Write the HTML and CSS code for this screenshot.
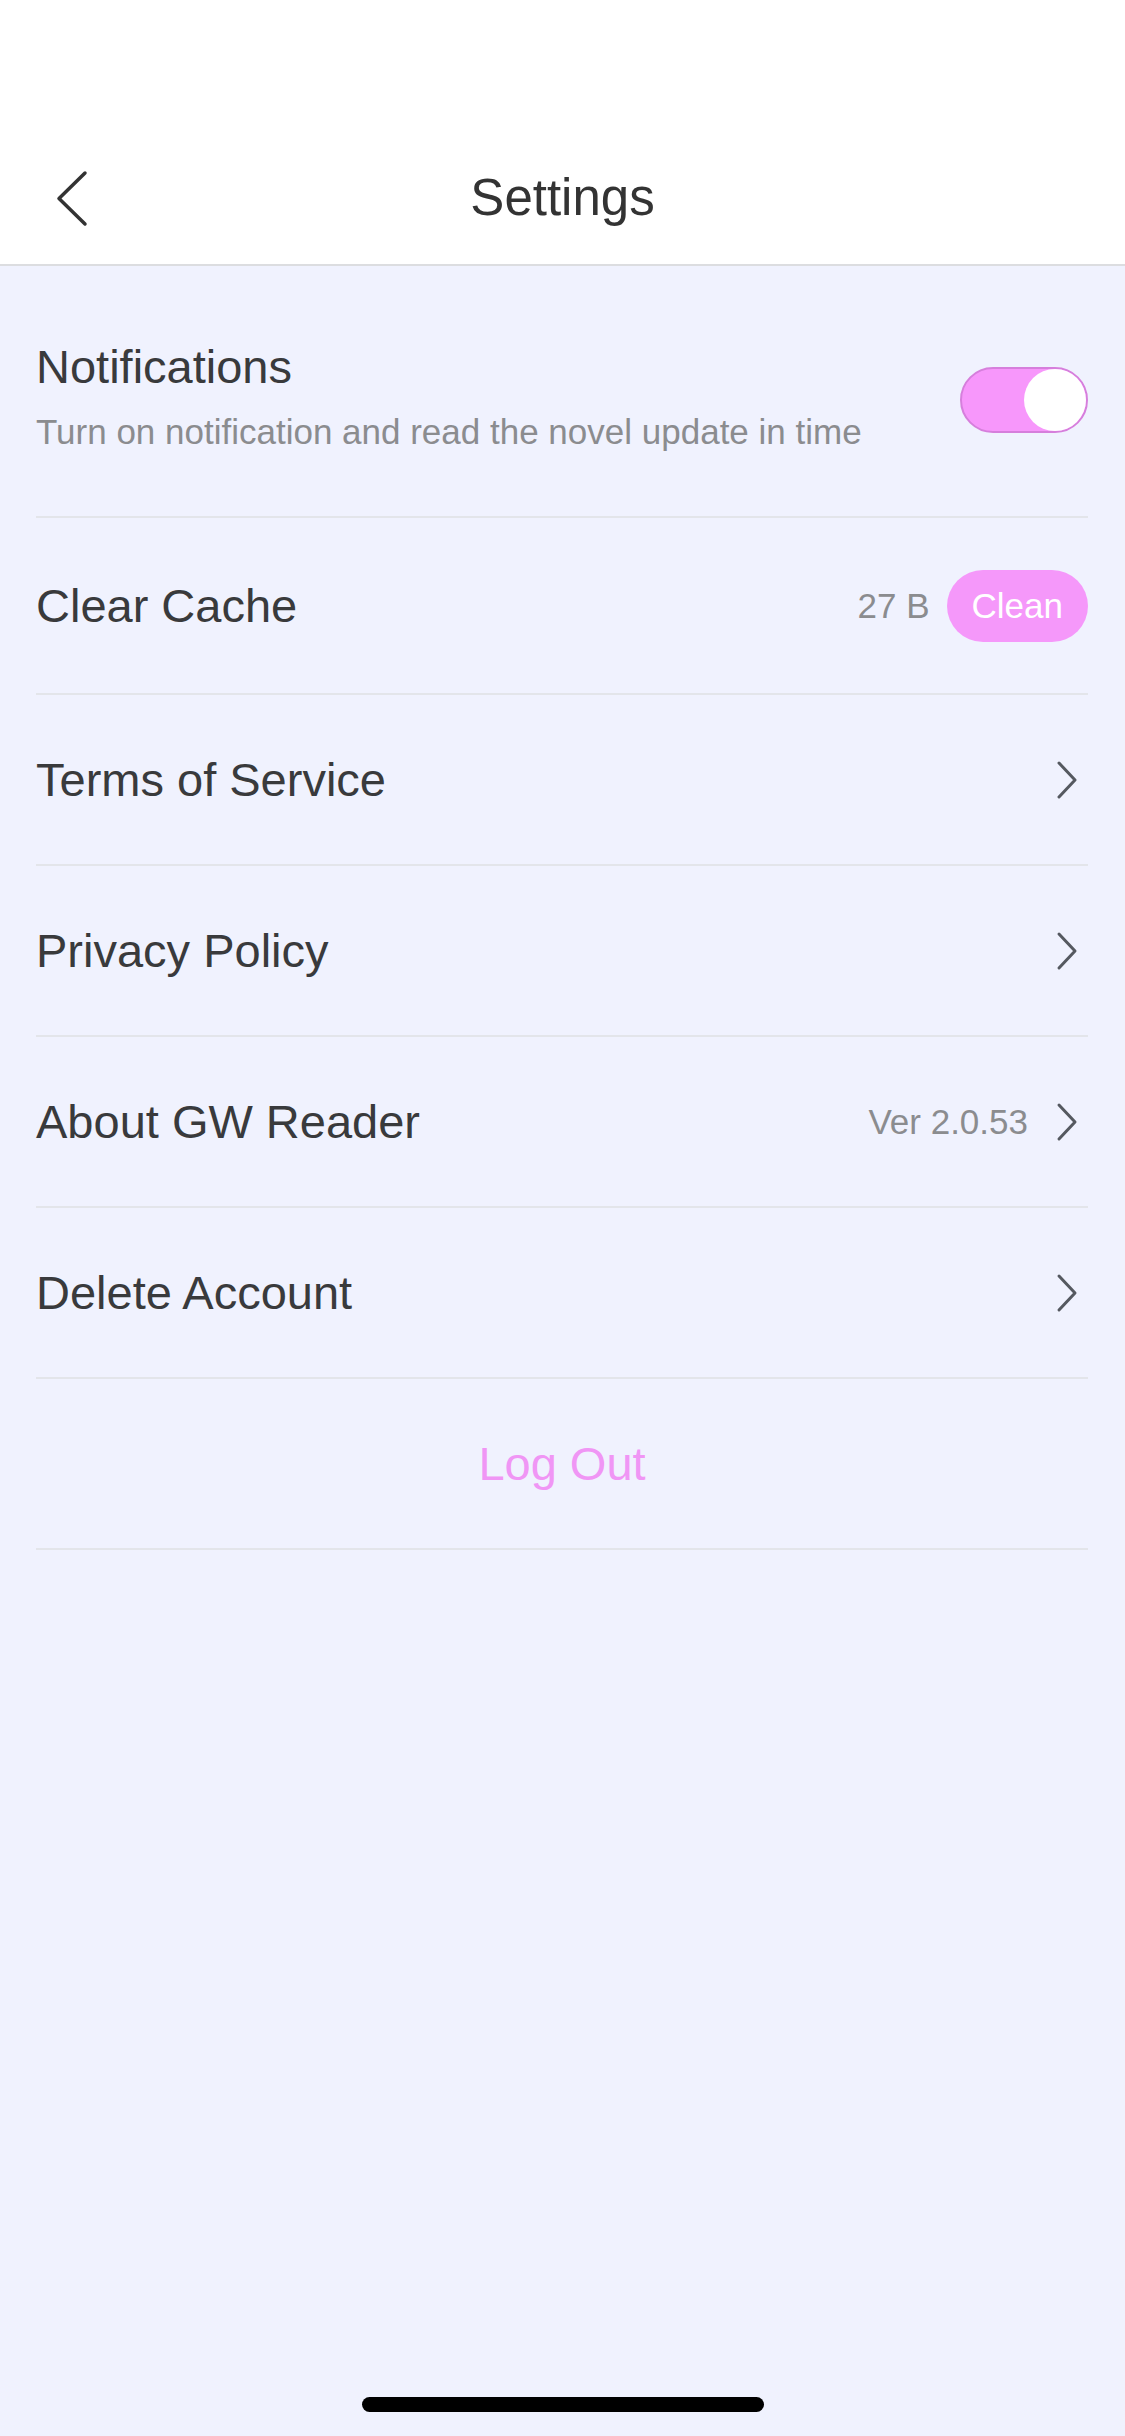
FILE: index.html
```html
<!DOCTYPE html>
<html lang="en">
<head>
<meta charset="utf-8">
<title>Settings</title>
<link rel="stylesheet" href="styles.css">
</head>
<body>
<div class="page">
  <div class="status-bar"></div>
  <header class="nav">
    <button class="back" aria-label="Back">
      <svg width="40" height="60" viewBox="0 0 40 60"><path d="M31 5 L5 30.5 L31 56" fill="none" stroke="#333333" stroke-width="3.5" stroke-linecap="round" stroke-linejoin="round"/></svg>
    </button>
    <h1 class="nav-title">Settings</h1>
  </header>

  <main class="list">
    <div class="row row-notify">
      <div class="notify-text">
        <div class="label">Notifications</div>
        <div class="sub">Turn on notification and read the novel update in time</div>
      </div>
      <div class="toggle"><span class="knob"></span></div>
    </div>

    <div class="row row-cache">
      <div class="label">Clear Cache</div>
      <div class="right">
        <span class="meta">27 B</span>
        <span class="clean">Clean</span>
      </div>
    </div>

    <div class="row">
      <div class="label">Terms of Service</div>
      <div class="right">
        <svg class="chev" width="22" height="40" viewBox="0 0 22 40"><path d="M3 3 L19 20 L3 37" fill="none" stroke="#555960" stroke-width="3" stroke-linecap="round" stroke-linejoin="round"/></svg>
      </div>
    </div>

    <div class="row">
      <div class="label">Privacy Policy</div>
      <div class="right">
        <svg class="chev" width="22" height="40" viewBox="0 0 22 40"><path d="M3 3 L19 20 L3 37" fill="none" stroke="#555960" stroke-width="3" stroke-linecap="round" stroke-linejoin="round"/></svg>
      </div>
    </div>

    <div class="row">
      <div class="label">About GW Reader</div>
      <div class="right">
        <span class="meta ver">Ver 2.0.53</span>
        <svg class="chev" width="22" height="40" viewBox="0 0 22 40"><path d="M3 3 L19 20 L3 37" fill="none" stroke="#555960" stroke-width="3" stroke-linecap="round" stroke-linejoin="round"/></svg>
      </div>
    </div>

    <div class="row">
      <div class="label">Delete Account</div>
      <div class="right">
        <svg class="chev" width="22" height="40" viewBox="0 0 22 40"><path d="M3 3 L19 20 L3 37" fill="none" stroke="#555960" stroke-width="3" stroke-linecap="round" stroke-linejoin="round"/></svg>
      </div>
    </div>

    <div class="row row-logout">
      <div class="logout">Log Out</div>
    </div>
  </main>

  <div class="spacer"></div>
  <div class="home-indicator"></div>
</div>
</body>
</html>
```

FILE: styles.css
```css
* { box-sizing: border-box; }

html, body {
  margin: 0;
  padding: 0;
}

body {
  width: 1125px;
  height: 2436px;
  background: #f0f2fe;
  font-family: "Liberation Sans", Arial, sans-serif;
  color: #353535;
}

.page {
  width: 1125px;
  height: 2436px;
  display: flex;
  flex-direction: column;
}

.status-bar {
  height: 132px;
  background: #ffffff;
}

.nav {
  height: 134px;
  background: #ffffff;
  border-bottom: 2px solid #dcdde0;
  display: flex;
  align-items: center;
  justify-content: center;
  position: relative;
}

.back {
  position: absolute;
  left: 54px;
  top: 36px;
  width: 40px;
  height: 60px;
  padding: 0;
  border: 0;
  background: none;
  display: flex;
}

.nav-title {
  margin: 0;
  font-size: 51px;
  font-weight: 400;
  color: #333333;
  line-height: 60px;
}

.list {
  padding: 0 37px 0 36px;
  display: flex;
  flex-direction: column;
}

.row {
  height: 171px;
  border-bottom: 2px solid #e3e5ea;
  display: flex;
  align-items: center;
  justify-content: space-between;
}

.label {
  font-size: 47px;
  line-height: 60px;
  color: #393a3c;
}

.row-notify {
  height: 252px;
  align-items: center;
  padding: 8px 0 0;
}

.notify-text {
  display: flex;
  flex-direction: column;
  gap: 13px;
}

.sub {
  font-size: 35px;
  line-height: 44px;
  color: #8b8c8f;
}

.toggle {
  width: 128px;
  height: 66px;
  border-radius: 33px;
  background: #f797fb;
  border: 2px solid #d67fdc;
  display: flex;
  justify-content: flex-end;
  align-items: center;
  margin-top: 10px;
}

.knob {
  width: 62px;
  height: 62px;
  border-radius: 50%;
  background: #ffffff;
}

.row-cache {
  height: 177px;
}

.right {
  display: flex;
  align-items: center;
}

.meta {
  font-size: 35px;
  color: #8b8c8f;
}

.clean {
  margin-left: 17px;
  height: 72px;
  padding: 0 25px;
  border-radius: 36px;
  background: #f598fa;
  color: #ffffff;
  font-size: 35px;
  line-height: 72px;
}

.ver {
  margin-right: 28px;
}

.chev {
  display: block;
  margin-right: 10px;
}

.row-logout {
  justify-content: center;
}

.logout {
  font-size: 47px;
  line-height: 60px;
  color: #f096f5;
}

.spacer {
  flex: 1;
}

.home-indicator {
  width: 402px;
  height: 15px;
  border-radius: 8px;
  background: #000000;
  margin: 0 auto 24px;
  flex: none;
}
```
